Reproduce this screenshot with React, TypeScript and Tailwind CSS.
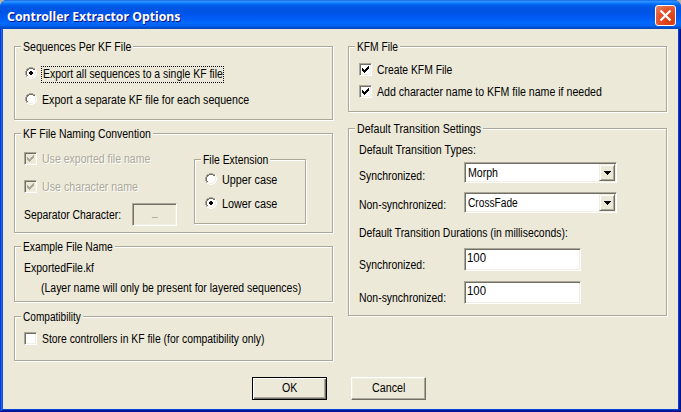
import { useLayoutEffect, useRef, useState } from "react";
import type { ReactNode } from "react";

/* One line of dialog text, condensed horizontally to a given width. */
function Text({ children, width, className = "" }: { children: string; width: number; className?: string }) {
  const ref = useRef<HTMLSpanElement>(null);
  const [scale, setScale] = useState(1);
  useLayoutEffect(() => {
    if (ref.current) setScale(width / ref.current.offsetWidth);
  }, [width]);
  return (
    <span className={`block h-4 shrink-0 ${className}`} style={{ width }}>
      <span ref={ref} className="inline-block origin-left whitespace-pre" style={{ transform: `scaleX(${scale})` }}>
        {children}
      </span>
    </span>
  );
}

function Group({ title, width, className, children }: { title: string; width: number; className: string; children: ReactNode }) {
  return (
    <section className={`relative border border-[#aca899] shadow-[1px_1px_0_#fff,inset_1px_1px_0_#fff] ${className}`}>
      <h2 className="absolute -top-2 left-1.5 bg-[#ece9d8] pr-0.5 pl-0.5">
        <Text width={width}>{title}</Text>
      </h2>
      {children}
    </section>
  );
}

const sunken =
  "border border-t-[#aca899] border-l-[#aca899] border-r-white border-b-white shadow-[inset_1px_1px_0_#716f64,inset_-1px_-1px_0_#f1efe2]";

function Check({ label, width, checked = false, disabled = false, className = "" }: { label: string; width: number; checked?: boolean; disabled?: boolean; className?: string }) {
  return (
    <label className={`flex h-4 items-start ${className}`}>
      <span className={`mt-px h-[13px] w-[13px] shrink-0 ${sunken} ${disabled ? "bg-[#ece9d8]" : "bg-white"}`}>
        {checked && (
          <svg width="11" height="11" viewBox="0 0 11 11" shapeRendering="crispEdges" fill={disabled ? "#aca899" : "#000"}>
            <path d="M2 4h1v1h1v1h1v-1h1v-1h1v-1h1v-1h1v3h-1v1h-1v1h-1v1h-1v1h-1v-1h-1v-1h-1z" />
          </svg>
        )}
      </span>
      <Text width={width} className={`ml-[5px] ${disabled ? "text-[#aca899] [text-shadow:1px_1px_0_#fff]" : ""}`}>
        {label}
      </Text>
    </label>
  );
}

function Radio({ label, width, checked = false, focused = false, className = "" }: { label: string; width: number; checked?: boolean; focused?: boolean; className?: string }) {
  return (
    <label className={`flex h-4 items-start ${className}`}>
      <svg className="mt-px shrink-0" width="12" height="12" viewBox="0 0 12 12" shapeRendering="crispEdges">
        <path fill="#fff" d="M4 1h4v1h2v2h1v4h-1v2h-2v1h-4v-1h-2v-2h-1v-4h1v-2h2z" />
        <path fill="#aca899" d="M4 0h4v1h-4zM2 1h2v1h-2zM8 1h2v1h-2zM1 2h1v2h-1zM0 4h1v4h-1zM1 8h1v2h-1z" />
        <path fill="#716f64" d="M4 1h4v1h-4zM2 2h2v1h-2zM8 2h2v1h-2zM2 3h1v1h-1zM1 4h1v4h-1zM2 8h1v1h-1z" />
        <path fill="#f1efe2" d="M9 3h1v1h-1zM10 4h1v4h-1zM9 8h1v1h-1zM8 9h1v1h-1zM4 10h4v1h-4zM2 9h2v1h-2z" />
        <path fill="#fff" d="M10 2h1v2h-1zM11 4h1v4h-1zM10 8h1v2h-1zM8 10h2v1h-2zM4 11h4v1h-4zM2 10h2v1h-2z" />
        {checked && <path fill="#000" d="M5 4h2v1h1v2h-1v1h-2v-1h-1v-2h1z" />}
      </svg>
      <span className={focused ? "ml-1 h-[17px] shrink-0 border border-dotted border-black pl-px" : "ml-[5px]"}>
        <Text width={width} className={focused ? "-mt-px" : ""}>{label}</Text>
      </span>
    </label>
  );
}

function Select({ value, width }: { value: string; width: number }) {
  return (
    <div className={`flex h-[21px] w-[153px] justify-between bg-white p-px ${sunken}`}>
      <Text width={width} className="ml-0.5 mt-px">{value}</Text>
      <button className="flex h-[17px] w-4 items-center justify-center border border-t-[#f1efe2] border-l-[#f1efe2] border-r-[#716f64] border-b-[#716f64] bg-[#ece9d8] shadow-[inset_1px_1px_0_#fff,inset_-1px_-1px_0_#aca899]">
        <svg width="7" height="4" viewBox="0 0 7 4" shapeRendering="crispEdges">
          <path d="M0 0h7v1h-1v1h-1v1h-1v1h-1v-1h-1v-1h-1v-1h-1z" />
        </svg>
      </button>
    </div>
  );
}

function NumberBox() {
  return (
    <div className={`h-[23px] w-[117px] bg-white pt-px pl-0.5 ${sunken}`}>
      <Text width={19}>100</Text>
    </div>
  );
}

export default function App() {
  return (
    <main className="h-[412px] w-[681px] overflow-hidden bg-[#b5b5a8] font-['Liberation_Sans',Arial,sans-serif] text-[12px] leading-4 text-black">
      <div className="flex h-full flex-col overflow-hidden rounded-t-[7px] bg-[#0831d9]">
        <header className="flex h-[29px] shrink-0 items-start justify-between bg-[linear-gradient(180deg,#0058e6_0px,#3a93ff_1px,#288eff_2px,#127dff_3px,#036ffc_4px,#0262ee_5px,#0057e5_7px,#0054e3_11px,#0055eb_14px,#005bf5_18px,#026afe_23px,#0062ef_26px,#0052d6_27px,#0046bd_29px)] pt-[5px] pr-[5px] pl-[7px]">
          <Text
            width={174}
            className="mt-[3px] font-['Noto_Sans','Open_Sans',sans-serif] text-[13px] font-bold text-white [text-shadow:1px_1px_0_#0f1089]"
          >
            Controller Extractor Options
          </Text>
          <button className="flex h-[21px] w-[21px] items-center justify-center rounded-[3px] border border-white bg-[radial-gradient(circle_at_75%_80%,#d83a10_0%,#e4502a_55%,#e98468_100%)]">
            <svg width="13" height="13" viewBox="0 0 13 13" stroke="#fff" strokeWidth="2.2" fill="none">
              <path d="M1.5 1.5l10 10M11.5 1.5l-10 10" />
            </svg>
          </button>
        </header>

        <div className="h-[383px] border-x border-b border-l-[#0831d9] border-r-[#00138c] border-b-[#00138c]">
          <div className="h-[382px] border-x border-b border-l-[#166aee] border-r-[#001ea0] border-b-[#001ea0]">
            <div className="h-[381px] border-x border-b border-l-[#0855dd] border-r-[#0441d8] border-b-[#0441d8] bg-[#ece9d8]">
              <div className="flex h-[348px] gap-[15px] pt-[17px] pl-[11px]">
                <div className="flex w-[319px] flex-col">
                  <Group title="Sequences Per KF File" width={108} className="h-[74px] pt-[19px] pl-[10px]">
                    <Radio label="Export all sequences to a single KF file" width={180} checked focused />
                    <Radio label="Export a separate KF file for each sequence" width={207} className="mt-[10px]" />
                  </Group>
                  <Group title="KF File Naming Convention" width={128} className="mt-[13px] flex h-[100px]">
                    <div className="w-[179px] pt-[17px] pl-[9px]">
                      <Check label="Use exported file name" width={108} checked disabled />
                      <Check label="Use character name" width={96} checked disabled className="mt-3" />
                      <div className="mt-2 flex">
                        <Text width={97} className="mt-1">Separator Character:</Text>
                        <div className={`ml-[11px] flex h-[23px] w-[45px] shrink-0 justify-center text-[#aca899] ${sunken}`}>
                          <Text width={6} className="-mt-px">_</Text>
                        </div>
                      </div>
                    </div>
                    <Group title="File Extension" width={65} className="mt-[25px] h-[65px] w-[112px] pt-3 pl-[10px]">
                      <Radio label="Upper case" width={55} />
                      <Radio label="Lower case" width={55} checked className="mt-2" />
                    </Group>
                  </Group>
                  <Group title="Example File Name" width={90} className="mt-[13px] h-[56px] pt-[13px] pl-[9px]">
                    <Text width={70}>ExportedFile.kf</Text>
                    <Text width={260} className="mt-1 ml-[17px]">(Layer name will only be present for layered sequences)</Text>
                  </Group>
                  <Group title="Compatibility" width={58} className="mt-[14px] h-[45px] pt-[14px] pl-[9px]">
                    <Check label="Store controllers in KF file (for compatibility only)" width={222} />
                  </Group>
                </div>

                <div className="flex w-[319px] flex-col">
                  <Group title="KFM File" width={41} className="h-[66px] pt-[15px] pl-[10px]">
                    <Check label="Create KFM File" width={75} checked />
                    <Check label="Add character name to KFM file name if needed" width={225} checked className="mt-1.5" />
                  </Group>
                  <Group title="Default Transition Settings" width={124} className="mt-4 h-[188px] pt-[13px] pl-[10px]">
                    <Text width={117}>Default Transition Types:</Text>
                    <div className="mt-1 flex">
                      <Text width={66} className="mt-1.5 mr-[39px]">Synchronized:</Text>
                      <Select value="Morph" width={30} />
                    </div>
                    <div className="mt-2 flex">
                      <Text width={87} className="mt-[5px] mr-[18px]">Non-synchronized:</Text>
                      <Select value="CrossFade" width={50} />
                    </div>
                    <Text width={209} className="mt-3">Default Transition Durations (in milliseconds):</Text>
                    <div className="mt-[7px] flex">
                      <Text width={66} className="mt-[9px] mr-[39px]">Synchronized:</Text>
                      <NumberBox />
                    </div>
                    <div className="mt-2 flex">
                      <Text width={87} className="mt-[9px] mr-[18px]">Non-synchronized:</Text>
                      <NumberBox />
                    </div>
                  </Group>
                </div>
              </div>
              <footer className="flex gap-6 pl-[249px]">
                <button className="flex h-[23px] w-[75px] justify-center border border-black pt-0.5 shadow-[inset_1px_1px_0_#fff,inset_-1px_-1px_0_#716f64,inset_-2px_-2px_0_#aca899]">
                  <Text width={15}>OK</Text>
                </button>
                <button className="flex h-[23px] w-[75px] justify-center border border-t-white border-l-white border-r-[#716f64] border-b-[#716f64] pt-0.5 shadow-[inset_-1px_-1px_0_#aca899,inset_1px_1px_0_#f1efe2]">
                  <Text width={33}>Cancel</Text>
                </button>
              </footer>
            </div>
          </div>
        </div>
      </div>
    </main>
  );
}
